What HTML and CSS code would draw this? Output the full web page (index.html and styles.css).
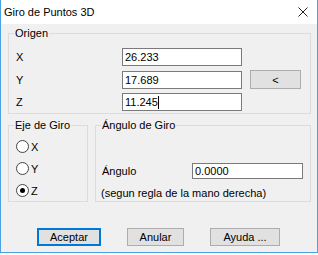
FILE: index.html
```html
<!DOCTYPE html>
<html lang="es">
<head>
  <meta charset="UTF-8">
  <title>Giro de Puntos 3D</title>
  <link rel="stylesheet" href="styles.css">
</head>
<body>

  <div class="window">
    <div class="titlebar">
      <span class="title">Giro de Puntos 3D</span>
      <svg class="close" width="10" height="10" viewBox="0 0 10 10">
        <path d="M0.5 0.5 L9.5 9.5 M9.5 0.5 L0.5 9.5" stroke="#222" stroke-width="1" fill="none"/>
      </svg>
    </div>

    <div class="dialog">
      <fieldset class="group">
        <legend>Origen</legend>
        <div class="coords">
          <span class="lbl">X</span>
          <div class="field">26.233</div>
          <span></span>

          <span class="lbl">Y</span>
          <div class="field">17.689</div>
          <div class="btn pick">&lt;</div>

          <span class="lbl">Z</span>
          <div class="field">11.245<span class="caret"></span></div>
          <span></span>
        </div>
      </fieldset>

      <div class="split">
        <fieldset class="group eje">
          <legend>Eje de Giro</legend>
          <div class="radios">
            <div class="radio"><span class="dot"></span>X</div>
            <div class="radio"><span class="dot"></span>Y</div>
            <div class="radio"><span class="dot on"></span>Z</div>
          </div>
        </fieldset>

        <fieldset class="group angulo">
          <legend>Ángulo de Giro</legend>
          <div class="angle">
            <div class="angle-row">
              <span class="lbl">Ángulo</span>
              <div class="field small">0.0000</div>
            </div>
            <p class="note">(segun regla de la mano derecha)</p>
          </div>
        </fieldset>
      </div>

      <div class="actions">
        <div class="btn default" style="width: 64px">Aceptar</div>
        <div class="btn" style="width: 57px">Anular</div>
        <div class="btn" style="width: 70px">Ayuda ...</div>
      </div>
    </div>
  </div>

</body>
</html>
```

FILE: styles.css
```css
html, body {
  margin: 0;
  background: #fff;
}
body {
  font-family: 'Liberation Sans', Arial, sans-serif;
  font-size: 11px;
  color: #000;
}
.window {
  width: 318px;
  box-sizing: border-box;
  border: 1px solid #4aa2e0;
  border-top: none;
  background: #f0f0f0;
}
.titlebar {
  height: 24px;
  background: #fff;
  display: flex;
  align-items: center;
  justify-content: space-between;
  padding: 0 9px 0 3px;
}
.title {
  font-size: 11px;
  color: #000;
}
.dialog {
  height: 228px;
  box-sizing: border-box;
  padding: 2px 6px 0 7px;
}
.group {
  margin: 0;
  padding: 0;
  border: 1px solid #dcdcdc;
  min-width: 0;
}
.group legend {
  margin-left: 5px;
  padding: 0 1px;
  line-height: 14px;
}
.coords {
  display: grid;
  grid-template-columns: 106px 120px 59px;
  grid-auto-rows: 18px;
  row-gap: 4.5px;
  align-items: center;
  padding: 8px 0 2px 7px;
}
.lbl {
  line-height: 14px;
}
.field {
  height: 18px;
  box-sizing: border-box;
  border: 1px solid #7a7a7a;
  background: #fff;
  padding: 0 2px;
  line-height: 16px;
  display: flex;
  align-items: center;
}
.field.small {
  width: 111px;
  height: 16px;
}
.caret {
  width: 1px;
  height: 13px;
  background: #000;
}
.btn {
  height: 18px;
  box-sizing: border-box;
  border: 1px solid #adadad;
  background: #e1e1e1;
  display: flex;
  align-items: center;
  justify-content: center;
}
.btn.pick {
  width: 51px;
  height: 19px;
  margin-left: 8px;
}
.btn.default {
  border: 2px solid #0078d7;
}
.split {
  display: flex;
  gap: 7px;
  margin-top: 4px;
  height: 84px;
}
.eje {
  width: 80px;
  box-sizing: border-box;
}
.angulo {
  width: 216px;
  box-sizing: border-box;
}
.radios {
  display: flex;
  flex-direction: column;
  gap: 9px;
  padding: 8px 0 0 7px;
}
.radio {
  display: flex;
  align-items: center;
  gap: 2px;
  height: 13px;
}
.dot {
  width: 13px;
  height: 13px;
  box-sizing: border-box;
  border: 1px solid #444;
  border-radius: 50%;
  background: #fff;
  display: flex;
  align-items: center;
  justify-content: center;
}
.dot.on::after {
  content: "";
  width: 5px;
  height: 5px;
  border-radius: 50%;
  background: #000;
}
.angle {
  padding: 31px 0 0 6px;
}
.angle-row {
  display: flex;
  align-items: center;
  justify-content: space-between;
  padding-right: 7px;
}
.note {
  margin: 7px 0 0;
  line-height: 14px;
  margin-left: -1px;
}
.actions {
  display: flex;
  gap: 26px;
  margin: 26px 0 0 29px;
}
```
